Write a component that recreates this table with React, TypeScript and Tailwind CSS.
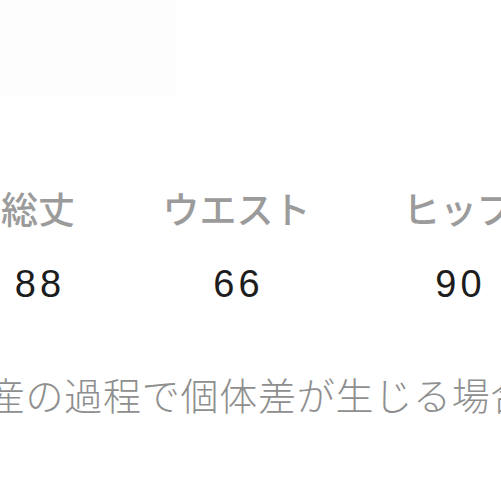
import React from 'react';

const sizes = [
  { label: '総丈', value: '88', width: 'w-[200px]' },
  { label: 'ウエスト', value: '66', width: 'w-[197px]' },
  { label: 'ヒップ', value: '90', width: 'w-[247px]' },
];

export default function App() {
  return (
    <div className="w-[501px] h-[501px] overflow-hidden bg-white flex flex-col font-['Noto_Sans_CJK_JP',sans-serif]">
      <div className="h-[96px] w-[176px] bg-[#fdfdfd] shrink-0" />

      <div className="flex ml-[-62px] mt-[94px] shrink-0">
        {sizes.map(s => (
          <div key={s.label} className={`${s.width} shrink-0 flex flex-col items-center`}>
            <div className="text-[37px] leading-[37px] font-medium text-[#9b9b9b] whitespace-nowrap">
              {s.label}
            </div>
            <div className="mt-[38px] text-[38px] leading-[38px] tracking-[4px] text-[#1c1c1c] font-['Liberation_Sans',Arial,sans-serif] pl-[4px]">
              {s.value}
            </div>
          </div>
        ))}
      </div>

      <div className="mt-[72px] ml-[-52px] whitespace-nowrap text-[38px] leading-[38px] tracking-[0.75px] font-light text-[#8e8e8e]">
        生産の過程で個体差が生じる場合があります。
      </div>
    </div>
  );
}
